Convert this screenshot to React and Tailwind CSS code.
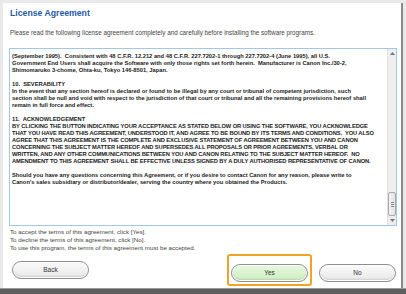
import React from 'react';

const body = [
    { t: '(September 1995).  Consistent with 48 C.F.R. 12.212 and 48 C.F.R. 227.7202-1 through 227.7202-4 (June 1995), all U.S.' },
    { t: 'Government End Users shall acquire the Software with only those rights set forth herein.  Manufacturer is Canon Inc./30-2,' },
    { t: 'Shimomaruko 3-chome, Ohta-ku, Tokyo 146-8501, Japan.' },
    { t: '' },
    { t: '10.  SEVERABILITY' },
    { t: 'In the event that any section hereof is declared or found to be illegal by any court or tribunal of competent jurisdiction, such' },
    { t: 'section shall be null and void with respect to the jurisdiction of that court or tribunal and all the remaining provisions hereof shall' },
    { t: 'remain in full force and effect.' },
    { t: '' },
    { t: '11.  ACKNOWLEDGEMENT' },
    { t: 'BY CLICKING THE BUTTON INDICATING YOUR ACCEPTANCE AS STATED BELOW OR USING THE SOFTWARE, YOU ACKNOWLEDGE', caps: true },
    { t: 'THAT YOU HAVE READ THIS AGREEMENT, UNDERSTOOD IT, AND AGREE TO BE BOUND BY ITS TERMS AND CONDITIONS.  YOU ALSO', caps: true },
    { t: 'AGREE THAT THIS AGREEMENT IS THE COMPLETE AND EXCLUSIVE STATEMENT OF AGREEMENT BETWEEN YOU AND CANON', caps: true },
    { t: 'CONCERNING THE SUBJECT MATTER HEREOF AND SUPERSEDES ALL PROPOSALS OR PRIOR AGREEMENTS, VERBAL OR', caps: true },
    { t: 'WRITTEN, AND ANY OTHER COMMUNICATIONS BETWEEN YOU AND CANON RELATING TO THE SUBJECT MATTER HEREOF.  NO', caps: true },
    { t: 'AMENDMENT TO THIS AGREEMENT SHALL BE EFFECTIVE UNLESS SIGNED BY A DULY AUTHORISED REPRESENTATIVE OF CANON.', caps: true },
    { t: '' },
    { t: 'Should you have any questions concerning this Agreement, or if you desire to contact Canon for any reason, please write to' },
    { t: "Canon's sales subsidiary or distributor/dealer, serving the country where you obtained the Products." },
];

function PillButton({ label, green }) {
    return (
        <button
            className={
                'w-[77px] h-[18px] rounded-full border border-[#8f8f8f] text-[6.5px] text-[#333] shadow-[inset_0_0_0_1px_#fff,inset_0_-2px_2px_rgba(0,0,0,0.12)] ' +
                (green ? 'bg-[linear-gradient(#e6f7df,#cdeec0)]' : 'bg-[linear-gradient(#fafafa,#e8e8e8)]')
            }
        >
            {label}
        </button>
    );
}

export default function App() {
    return (
        <div className="w-[406px] h-[294px] bg-[#e9e9e9] flex flex-col font-['Liberation_Sans',Arial,sans-serif]">
            <div className="flex flex-1 pt-[3px] pl-[3px]">
                <div className="w-[398px] bg-white flex flex-col">
                    <h1 className="pl-[7px] pt-[5px] text-[8.7px] leading-[11px] font-bold text-[#1f5aa6]">License Agreement</h1>
                    <p className="pl-[7px] mt-[10px] text-[6.3px] leading-[8px] text-[#444]">
                        Please read the following license agreement completely and carefully before installing the software programs.
                    </p>

                    {/* agreement text box */}
                    <div className="ml-[6px] mt-[11px] w-[388px] h-[178px] border border-[#a3c8e6] flex">
                        <div className="flex-1 pl-[2px] pt-[4px] text-[5.75px] leading-[7px] font-bold text-[#1a1a1a] whitespace-pre overflow-hidden">
                            {body.map((l, i) => (
                                <div key={i} className={l.caps ? 'tracking-[-0.1px]' : ''}>{l.t || ' '}</div>
                            ))}
                        </div>
                        <div className="w-[9px] bg-[#eeeeee] border-l border-[#e2e2e2] flex flex-col items-center">
                            <div className="h-[9px] flex items-center justify-center">
                                <svg width="5" height="3" viewBox="0 0 5 3"><path d="M0 3 L2.5 0 L5 3 Z" fill="#777" /></svg>
                            </div>
                            <div className="flex-1" />
                            <div className="w-[8px] h-[24px] rounded-[2px] border border-[#a8a8a8] bg-[linear-gradient(90deg,#f4f4f4,#e2e2e2)] flex flex-col items-center justify-center gap-[1px]">
                                <div className="w-[3px] h-px bg-[#888]" />
                                <div className="w-[3px] h-px bg-[#888]" />
                                <div className="w-[3px] h-px bg-[#888]" />
                            </div>
                            <div className="h-[9px] flex items-center justify-center">
                                <svg width="5" height="3" viewBox="0 0 5 3"><path d="M0 0 L2.5 3 L5 0 Z" fill="#777" /></svg>
                            </div>
                        </div>
                    </div>

                    <div className="pl-[7px] mt-[2px] text-[6.2px] leading-[8px] text-[#444]">
                        <p>To accept the terms of this agreement, click [Yes].</p>
                        <p>To decline the terms of this agreement, click [No].</p>
                        <p>To use this program, the terms of this agreement must be accepted.</p>
                    </div>

                    <div className="flex items-center mt-auto mb-[2px] pl-[9px] pr-[5px]">
                        <PillButton label="Back" />
                        <div className="ml-auto p-[2px] border-2 border-[#f3a322] rounded-[3px]">
                            <PillButton label="Yes" green />
                        </div>
                        <div className="ml-[7px]">
                            <PillButton label="No" />
                        </div>
                    </div>
                </div>
                <div className="w-[2px] bg-[#8a8a8a]" />
            </div>
            <div className="h-[6px] bg-[#5f5f5f] border-t border-[#9a9a9a]" />
        </div>
    );
}
